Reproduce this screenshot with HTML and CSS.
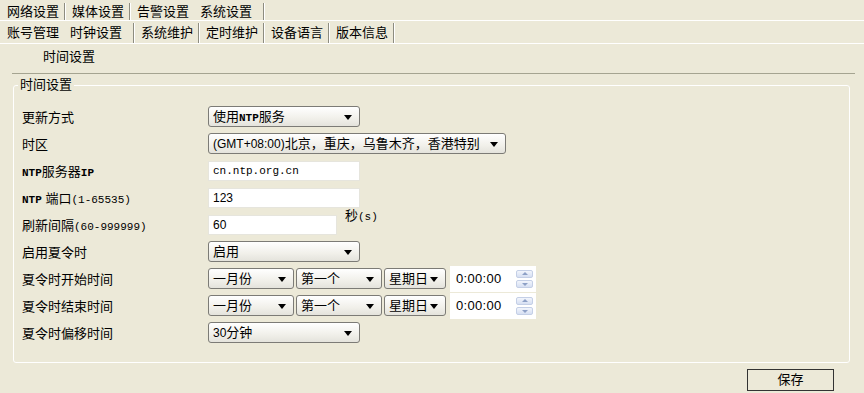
FILE: index.html
```html
<!DOCTYPE html>
<html>
<head>
    <meta charset="utf-8">
    <title>时钟设置</title>
    <link rel="stylesheet" href="styles.css">
</head>
<body>
    <div class="tabs tabs1">
        <span class="tab">网络设置</span>
        <span class="tab">媒体设置</span>
        <span class="tab nosep">告警设置</span>
        <span class="tab on">系统设置</span>
    </div>
    <div class="tabs tabs2">
        <span class="tab nosep">账号管理</span>
        <span class="tab on">时钟设置</span>
        <span class="tab">系统维护</span>
        <span class="tab">定时维护</span>
        <span class="tab">设备语言</span>
        <span class="tab">版本信息</span>
    </div>
    <div class="sub_hd">时间设置</div>
    <fieldset class="box">
        <legend>时间设置</legend>
        <div class="row">
            <label>更新方式</label>
            <div class="sel w152">使用<span class="m b">NTP</span>服务</div>
        </div>
        <div class="row">
            <label>时区</label>
            <div class="sel w298"><span class="s">(GMT+08:00)</span>北京，重庆，乌鲁木齐，香港特别</div>
        </div>
        <div class="row">
            <label><span class="m b">NTP</span>服务器<span class="m b">IP</span></label>
            <input class="txt w152 mono" type="text" value="cn.ntp.org.cn">
        </div>
        <div class="row">
            <label><span class="m b">NTP</span> 端口<span class="m">(1-65535)</span></label>
            <input class="txt w152" type="text" value="123">
        </div>
        <div class="row">
            <label>刷新间隔<span class="m">(60-999999)</span></label>
            <input class="txt w129" type="text" value="60">
            <span class="unit">秒<span class="m">(s)</span></span>
        </div>
        <div class="row">
            <label>启用夏令时</label>
            <div class="sel w152">启用</div>
        </div>
        <div class="row">
            <label>夏令时开始时间</label>
            <div class="group">
                <div class="sel w86">一月份</div>
                <div class="sel w86">第一个</div>
                <div class="sel w62">星期日</div>
                <div class="spin">
                    <span class="s t">0:00:00</span>
                    <span class="arrs"><i class="up"></i><i class="dn"></i></span>
                </div>
            </div>
        </div>
        <div class="row">
            <label>夏令时结束时间</label>
            <div class="group">
                <div class="sel w86">一月份</div>
                <div class="sel w86">第一个</div>
                <div class="sel w62">星期日</div>
                <div class="spin">
                    <span class="s t">0:00:00</span>
                    <span class="arrs"><i class="up"></i><i class="dn"></i></span>
                </div>
            </div>
        </div>
        <div class="row">
            <label>夏令时偏移时间</label>
            <div class="sel w152"><span class="s">30</span>分钟</div>
        </div>
    </fieldset>
    <div class="btns"><span class="btn">保存</span></div>
</body>
</html>
```

FILE: styles.css
```css
body { margin: 0; background: #ece9d8; color: #000; font: 13px "Liberation Sans", "Noto Sans CJK SC", sans-serif; }
.m { font-family: "Liberation Mono", "Noto Sans CJK SC", monospace; font-size: 11px; }
.m.b { font-weight: bold; }
.s { font-family: "Liberation Sans", sans-serif; font-size: 12px; }

.tabs { display: flex; border-bottom: 1px solid #fff; }
.tabs1 { height: 17px; padding-top: 3px; line-height: 17px; }
.tabs2 { height: 20px; padding-top: 2px; line-height: 20px; }
.tab { padding: 0 5px 0 7px; border-right: 1px solid #8d8c80; box-shadow: 1px 0 0 #fff; white-space: nowrap; }
.tab.nosep { border-right: 0; box-shadow: none; }
.tab.on { padding: 0 11px 0 6px; }

.sub_hd { margin: 0 9px 0 12px; padding: 5px 0 0 31px; height: 24px; line-height: 16px; border-bottom: 1px solid #a5a491; }

.box { margin: 3px 14px 0 13px; padding: 10px 0 16px 8px; border: 1px solid #fff; border-radius: 3px; min-width: 0; }
.box legend { margin-left: -4px; padding: 0 2px; line-height: 16px; }

.row { display: flex; align-items: center; height: 27px; }
.row label { width: 186px; flex: none; white-space: nowrap; }
.group { display: flex; align-items: center; gap: 2px; }

.sel { position: relative; box-sizing: border-box; height: 21px; line-height: 19px; padding-left: 4px; border: 1px solid #7c7b76; border-radius: 3px; background: linear-gradient(#fff, #f1f0ea 60%, #e4e3dc); white-space: nowrap; overflow: hidden; }
.sel::after { content: ""; position: absolute; right: 7px; top: 8px; border-left: 4px solid transparent; border-right: 4px solid transparent; border-top: 5px solid #000; }
.w152 { width: 152px; }
.w298 { width: 298px; }
.w129 { width: 129px; }
.w86 { width: 86px; }
.w62 { width: 62px; }

.txt { box-sizing: border-box; height: 20px; margin: 0; padding: 0 4px; border: 1px solid #e6e5dd; background: #fff; font: 12px "Liberation Sans", sans-serif; color: #000; outline: none; }
.txt.mono { font: 11px "Liberation Mono", monospace; }
.unit { align-self: flex-start; margin: -3px 0 0 8px; line-height: 16px; }

.spin { display: flex; align-items: center; justify-content: space-between; box-sizing: border-box; width: 86px; height: 26px; margin-left: 2px; padding: 0 3px 0 6px; background: #fff; }
.spin .t { font-size: 13px; letter-spacing: 0.3px; }
.arrs { display: flex; flex-direction: column; gap: 2px; }
.arrs i { position: relative; display: block; width: 17px; height: 8px; box-sizing: border-box; border: 1px solid #c4cfe6; border-radius: 2px; background: linear-gradient(#f2f5fc, #d6dff2); }
.arrs i::after { content: ""; position: absolute; left: 5px; border-left: 3px solid transparent; border-right: 3px solid transparent; }
.arrs .up::after { top: 1px; border-bottom: 3px solid #8da0c6; }
.arrs .dn::after { top: 2px; border-top: 3px solid #8da0c6; }

.btns { display: flex; justify-content: flex-end; padding: 6px 30px 0 0; }
.btn { box-sizing: border-box; width: 87px; height: 22px; border: 1px solid #333; text-align: center; line-height: 20px; }
```
